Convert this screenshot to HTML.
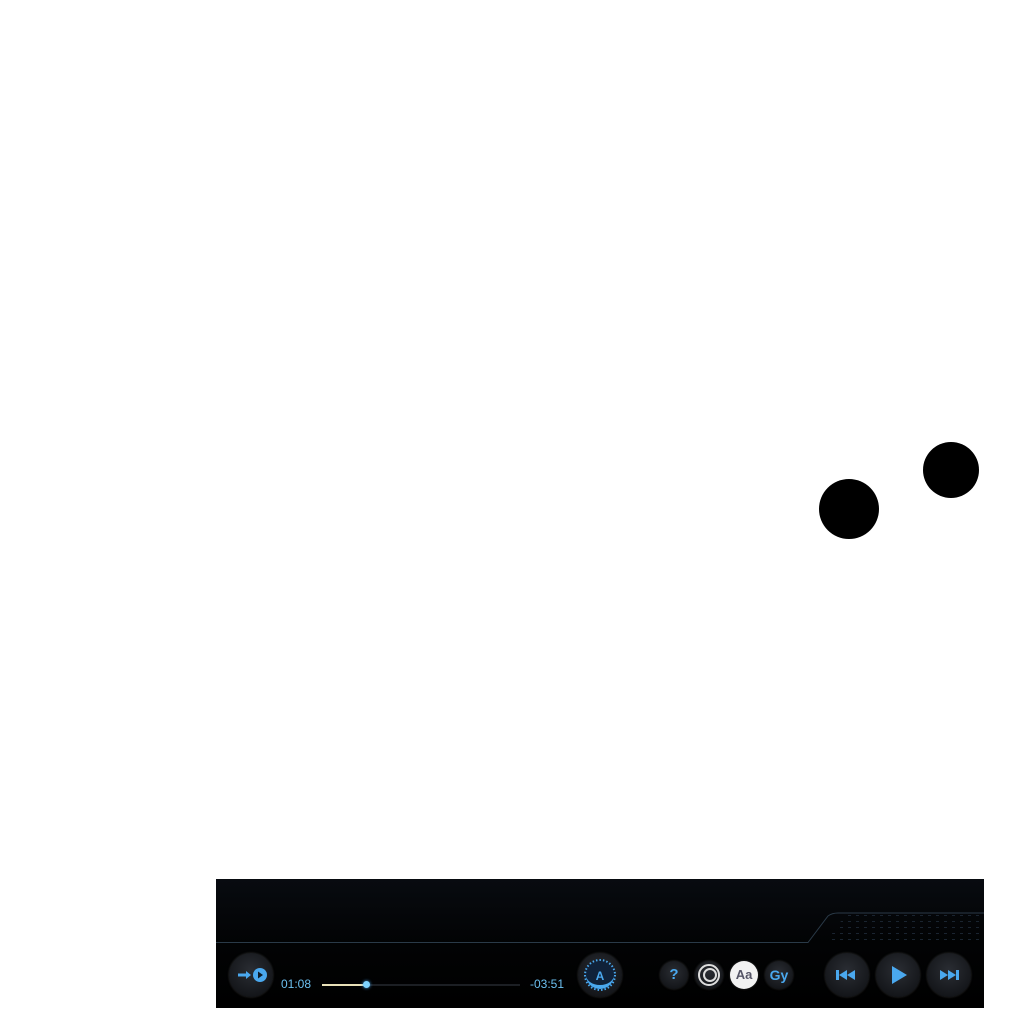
<!DOCTYPE html>
<html><head><style>
body{margin:0;width:1024px;height:1024px;background:#fff;position:relative;overflow:hidden;font-family:"Liberation Sans",sans-serif}
.d{position:absolute;border-radius:50%;background:#000}
.bar{position:absolute;left:216px;top:879px;width:768px;height:129px;background:linear-gradient(#080b10,#020304 50%,#000)}
.b{position:absolute;border-radius:50%;background:radial-gradient(circle at 50% 40%,#2a2d33,#15171b 70%,#0b0c0e);box-shadow:0 0 2px #333}
.t{position:absolute;color:#6cc0f0;font-size:12px;top:977px}
</style></head><body>
<div class="d" style="left:819px;top:479px;width:60px;height:60px"></div>
<div class="d" style="left:923px;top:442px;width:56px;height:56px"></div>
<div class="bar"></div>
<svg style="position:absolute;left:216px;top:879px" width="768" height="129">
<defs><pattern id="p" width="8" height="6" patternUnits="userSpaceOnUse"><rect width="3" height="1" fill="#1a2430"/></pattern></defs>
<path d="M610 63 L630 35 L768 35 L768 63Z" fill="url(#p)"/>
<path d="M0 63.5 H592 L612 37 Q616 34 622 34 H768" stroke="#2a3a48" fill="none"/>
</svg>
<div class="b" style="left:229px;top:953px;width:44px;height:44px"></div>
<svg style="position:absolute;left:229px;top:953px" width="44" height="44"><path d="M9 22h9" stroke="#4aa8ee" stroke-width="3"/><path d="M17 18l5 4-5 4z" fill="#4aa8ee"/><circle cx="31" cy="22" r="7" fill="#4aa8ee"/><path d="M29 18.5l5 3.5-5 3.5z" fill="#0d1a26"/></svg>
<div class="t" style="left:281px">01:08</div>
<div style="position:absolute;left:322px;top:984px;width:198px;height:2px;background:#1c1f24"></div>
<div style="position:absolute;left:322px;top:984px;width:42px;height:2px;background:#e8e0b8"></div>
<div style="position:absolute;left:363px;top:981px;width:7px;height:7px;border-radius:50%;background:#7fd4ff;box-shadow:0 0 3px #4aa8ee"></div>
<div class="t" style="left:530px">-03:51</div>
<div class="b" style="left:578px;top:953px;width:44px;height:44px"></div>
<svg style="position:absolute;left:578px;top:953px" width="44" height="44"><circle cx="22" cy="22" r="15" fill="#10223a" stroke="#4aa8ee" stroke-width="2" stroke-dasharray="1.5 2"/><path d="M8 22a14 14 0 0 0 28 0a14 10 0 0 1-28 0z" fill="#4aa8ee"/><text x="22" y="27" font-size="12" font-weight="bold" fill="#4aa8ee" text-anchor="middle" font-family="Liberation Sans">A</text></svg>
<div class="b" style="left:660px;top:961px;width:28px;height:28px;text-align:center;line-height:28px;color:#4aa8ee;font-weight:bold;font-size:15px">?</div>
<div class="b" style="left:695px;top:961px;width:28px;height:28px"></div>
<svg style="position:absolute;left:695px;top:961px" width="28" height="28"><circle cx="14" cy="14" r="10" fill="none" stroke="#ddd" stroke-width="2"/><circle cx="15" cy="14" r="6" fill="none" stroke="#ddd" stroke-width="2"/></svg>
<div class="b" style="left:730px;top:961px;width:28px;height:28px;background:#f2f2f2;text-align:center;line-height:28px;color:#556;font-weight:bold;font-size:13px">Aa</div>
<div class="b" style="left:765px;top:961px;width:28px;height:28px;text-align:center;line-height:28px;color:#4aa8ee;font-weight:bold;font-size:14px">Gy</div>
<div class="b" style="left:825px;top:953px;width:44px;height:44px"></div>
<svg style="position:absolute;left:825px;top:953px" width="44" height="44"><rect x="11" y="17" width="3" height="10" fill="#4aa8ee"/><path d="M14 22l8-5v10zM22 22l8-5v10z" fill="#4aa8ee"/></svg>
<div class="b" style="left:876px;top:953px;width:44px;height:44px"></div>
<svg style="position:absolute;left:876px;top:953px" width="44" height="44"><path d="M16 13l15 9-15 9z" fill="#4aa8ee"/></svg>
<div class="b" style="left:927px;top:953px;width:44px;height:44px"></div>
<svg style="position:absolute;left:927px;top:953px" width="44" height="44"><path d="M13 17l8 5-8 5zM21 17l8 5-8 5z" fill="#4aa8ee"/><rect x="29" y="17" width="3" height="10" fill="#4aa8ee"/></svg>
</body></html>
